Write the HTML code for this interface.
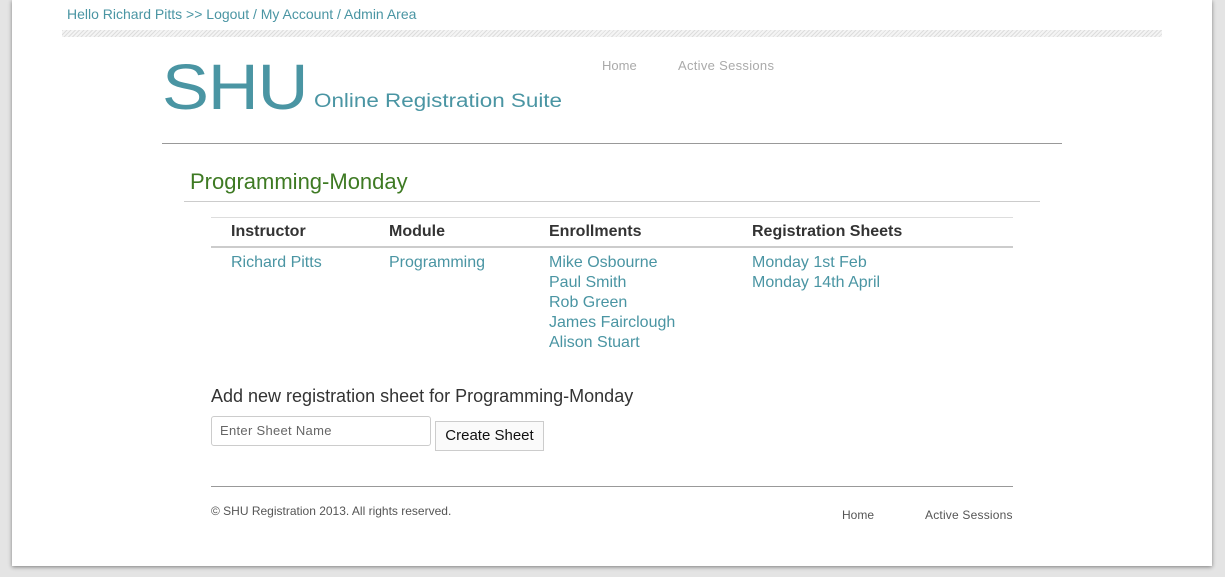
<!DOCTYPE html>
<html><head><meta charset="utf-8"><style>
body{margin:0;width:1225px;height:577px;background:#e4e4e4;font-family:"Liberation Sans",sans-serif;position:relative;overflow:hidden}
.wrap{position:absolute;left:12px;top:0;width:1200px;height:566px;background:#fff;box-shadow:0 1px 4px rgba(0,0,0,.45)}
.a{position:absolute;white-space:nowrap}
a,.l{color:#4a95a3;text-decoration:none}
.stripe{position:absolute;left:50px;top:30px;width:1100px;height:7px;background:repeating-linear-gradient(135deg,#ddd 0 1px,#f4f4f4 1px 3px)}
.hr{position:absolute;height:1px}
</style></head><body>
<div class="wrap">
<div class="a l" style="left:55px;top:6px;font-size:14px">Hello Richard Pitts &gt;&gt; Logout / My Account / Admin Area</div>
<div class="stripe"></div>
<div class="a" style="left:150px;top:50px;font-size:64px;color:#4a95a3;transform:scaleX(1.1);transform-origin:left;letter-spacing:-1px">SHU</div>
<div class="a" style="left:302px;top:91px;font-size:19px;color:#4a95a3;transform:scaleX(1.18);transform-origin:left">Online Registration Suite</div>
<div class="a" style="left:590px;top:58px;font-size:13px;color:#aaa">Home</div>
<div class="a" style="left:666px;top:58px;font-size:13px;color:#aaa;letter-spacing:0.3px">Active Sessions</div>
<div class="hr" style="left:150px;top:143px;width:900px;background:#999"></div>
<div class="a" style="left:178px;top:169px;font-size:22px;color:#3e7a23">Programming-Monday</div>
<div class="hr" style="left:172px;top:201px;width:856px;background:#ccc"></div>
<div class="hr" style="left:199px;top:217px;width:802px;background:#ddd"></div>
<div class="hr" style="left:199px;top:246px;width:802px;background:#ccc;height:2px"></div>
<div class="a" style="left:219px;top:223px;font-size:16px;font-weight:bold;color:#333">Instructor</div>
<div class="a" style="left:377px;top:223px;font-size:16px;font-weight:bold;color:#333">Module</div>
<div class="a" style="left:537px;top:223px;font-size:16px;font-weight:bold;color:#333">Enrollments</div>
<div class="a" style="left:740px;top:223px;font-size:16px;font-weight:bold;color:#333">Registration Sheets</div>
<div class="a l" style="left:219px;top:253px;font-size:16px;line-height:20px">Richard Pitts</div>
<div class="a l" style="left:377px;top:253px;font-size:16px;line-height:20px">Programming</div>
<div class="a l" style="left:537px;top:253px;font-size:16px;line-height:20px">Mike Osbourne<br>Paul Smith<br>Rob Green<br>James Fairclough<br>Alison Stuart</div>
<div class="a l" style="left:740px;top:253px;font-size:16px;line-height:20px">Monday 1st Feb<br>Monday 14th April</div>
<div class="a" style="left:199px;top:386px;font-size:18px;color:#333">Add new registration sheet for Programming-Monday</div>
<div class="a" style="left:199px;top:416px;border:1px solid #ccc;border-radius:3px;font-size:13px;color:#666;line-height:28px;padding-left:8px;box-sizing:border-box;width:220px;height:30px;letter-spacing:0.3px">Enter Sheet Name</div>
<div class="a" style="left:423px;top:421px;width:109px;height:30px;border:1px solid #ccc;background:#fafafa;font-size:15px;color:#111;line-height:28px;text-align:center;box-sizing:border-box">Create Sheet</div>
<div class="hr" style="left:199px;top:486px;width:802px;background:#999"></div>
<div class="a" style="left:199px;top:504px;font-size:12px;color:#555">© SHU Registration 2013. All rights reserved.</div>
<div class="a" style="left:830px;top:508px;font-size:12px;color:#555">Home</div>
<div class="a" style="left:913px;top:508px;font-size:12px;color:#555;letter-spacing:0.2px">Active Sessions</div>
</div>
</body></html>
